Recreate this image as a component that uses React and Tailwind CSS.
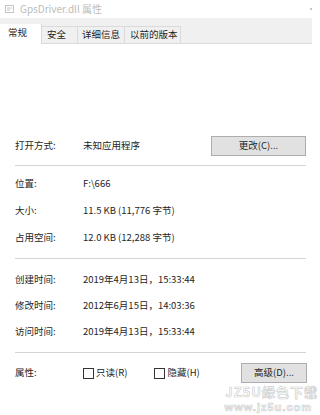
import React from 'react'

const font = { fontFamily: '"Noto Sans CJK SC", "Noto Sans", sans-serif' }

function Row({ label, children, h = 'h-[26px]' }) {
  return (
    <div className={`flex items-center ${h}`}>
      <div className="w-[68px] shrink-0">{label}</div>
      <div className="flex-1">{children}</div>
    </div>
  )
}

function Sep({ mt }) {
  return <div className={`${mt} h-px w-[291px] bg-[#d4d4d4]`} />
}

function Check({ label }) {
  return (
    <span className="flex items-center gap-[2px]">
      <span className="inline-block h-[11px] w-[11px] border border-[#333] bg-white" />
      {label}
    </span>
  )
}

export default function App() {
  return (
    <div
      className="relative h-[415px] w-[320px] overflow-hidden bg-white text-[9.5px] leading-none text-[#1e1e1e]"
      style={font}
    >
      {/* title bar */}
      <div className="flex h-[18px] items-center pl-[5px] text-[10px] text-[#bcbcbc]">
        <svg width="9" height="8" viewBox="0 0 9 8" className="mr-[6px]">
          <rect x="0.5" y="0.5" width="8" height="7" fill="none" stroke="#c4c4c4" />
          <path d="M2 3h5M2 5h3" stroke="#c4c4c4" />
        </svg>
        GpsDriver.dll 属性
        <span className="ml-auto mr-[8px] h-[2px] w-[2px] bg-[#c8c8c8]" />
      </div>

      {/* tabs */}
      <div className="flex h-[26px] w-[312px] items-end border-b border-[#dadada] bg-[#f0f0f0]">
        <div className="-mb-px flex h-[20px] w-[42px] items-center pl-[8px] pb-[2px] bg-white border-r border-[#dadada]">
          常规
        </div>
        <div className="flex h-[17px] w-[36px] items-center pl-[5px] border-r border-t border-[#dadada]">
          安全
        </div>
        <div className="flex h-[17px] w-[47px] items-center pl-[4px] border-r border-t border-[#dadada]">
          详细信息
        </div>
        <div className="flex h-[17px] w-[56px] items-center pl-[5px] border-r border-t border-[#dadada]">
          以前的版本
        </div>
      </div>

      {/* content */}
      <div className="flex flex-col pl-[15px]">
        <div className="mt-[92px] flex h-[20px] items-center">
          <div className="w-[68px] shrink-0">打开方式:</div>
          <div className="flex-1">未知应用程序</div>
          <button className="mr-[14px] flex h-[20px] w-[95px] items-center justify-center border border-[#adadad] bg-[#e1e1e1]">
            更改(C)...
          </button>
        </div>
        <Sep mt="mt-[9px]" />

        <div className="mt-[5px]">
          <Row label="位置:">F:\666</Row>
          <Row label="大小:" h="h-[27px]">11.5 KB (11,776 字节)</Row>
          <Row label="占用空间:" h="h-[27px]">12.0 KB (12,288 字节)</Row>
        </div>
        <Sep mt="mt-[7px]" />

        <div className="mt-[8px]">
          <Row label="创建时间:">2019年4月13日，15:33:44</Row>
          <Row label="修改时间:">2012年6月15日，14:03:36</Row>
          <Row label="访问时间:">2019年4月13日，15:33:44</Row>
        </div>
        <Sep mt="mt-[7px]" />

        <div className="mt-[10px] flex h-[20px] items-center">
          <div className="w-[68px] shrink-0">属性:</div>
          <Check label="只读(R)" />
          <div className="ml-[27px]">
            <Check label="隐藏(H)" />
          </div>
          <button className="ml-auto mr-[13px] flex h-[20px] w-[66px] items-center justify-center border border-[#adadad] bg-[#e1e1e1]">
            高级(D)...
          </button>
        </div>
      </div>

      {/* watermark */}
      <div className="pointer-events-none absolute right-[2px] top-[382px] flex flex-col items-end font-bold text-transparent [-webkit-text-stroke:0.7px_#cfcfcf]">
        <span className="block text-[13px] leading-[19px] tracking-[1px]">JZ5U绿色下载</span>
        <span className="mr-[6px] block font-['Liberation_Sans',sans-serif] text-[11px] leading-[13px] tracking-[1px]">
          www.jz5u.com
        </span>
      </div>
    </div>
  )
}
